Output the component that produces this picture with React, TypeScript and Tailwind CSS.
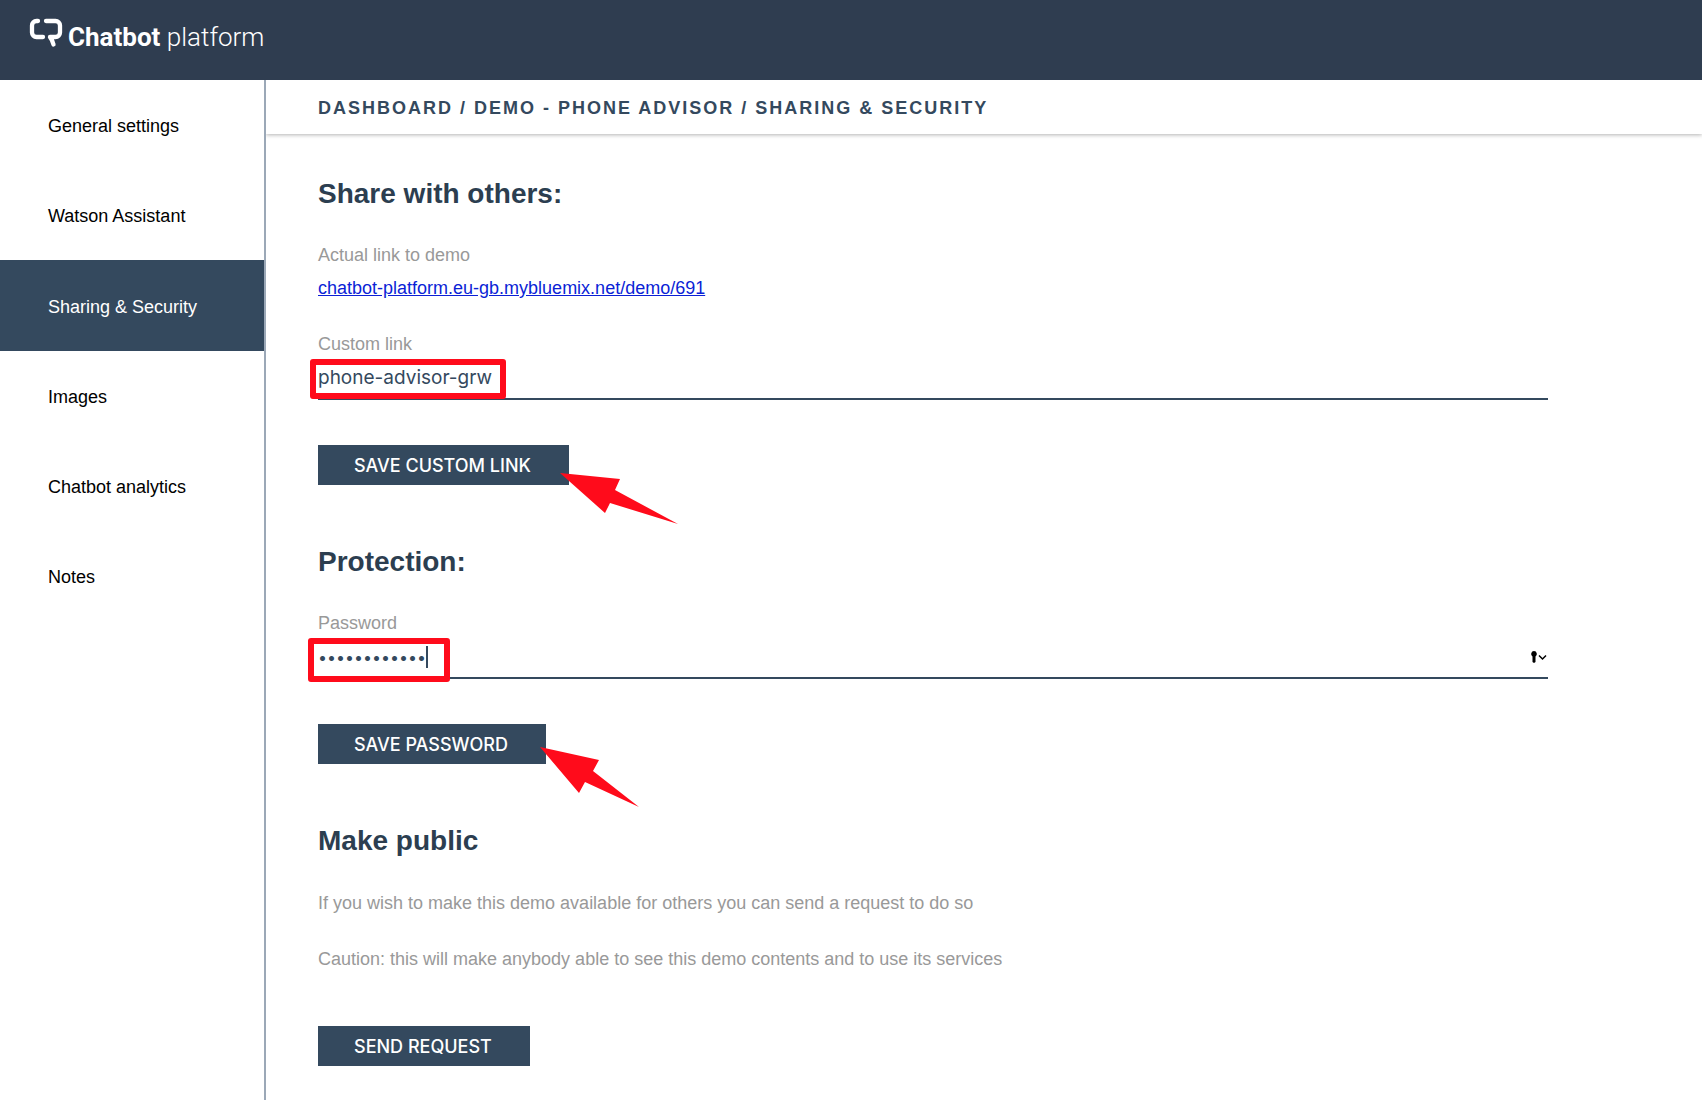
import type { ReactNode } from 'react';

const navItems = ['General settings', 'Watson Assistant', 'Sharing & Security', 'Images', 'Chatbot analytics', 'Notes'];

function Logo() {
  return (
    <svg className="h-8 w-9" viewBox="28 16 36 32" fill="none" stroke="#fff" strokeWidth="4.300" strokeLinecap="round" strokeLinejoin="round" aria-hidden="true">
      <path d="M38 21h-1.500a4.500 4.500 0 0 0-4.500 4.500v7a4.500 4.500 0 0 0 4.500 4.500h6.500" />
      <path d="M46 21h9.500a4.500 4.500 0 0 1 4.500 4.500v7a4.500 4.500 0 0 1-4.500 4.500h-5.500q2.500 3 3.500 7.500" />
    </svg>
  );
}

function Heading({ children }: { children: ReactNode }) {
  return <h2 className="text-[28px] leading-9 font-bold text-[#2c3e50]">{children}</h2>;
}

const labelClass = 'block text-lg leading-6 text-[#999999]';
const inputClass = 'block h-[41px] w-full border-b-2 border-[#34495e] bg-transparent pb-0.5 font-[Inter,sans-serif] text-[#34495e] outline-none';
const buttonClass = 'block h-10 bg-[#34495e] pt-0.5 pr-[38px] pl-9 font-[Inter,sans-serif] text-lg leading-6 font-medium text-white uppercase';

function Arrow({ points, className }: { points: string; className: string }) {
  return (
    <svg className={`pointer-events-none absolute ${className}`} aria-hidden="true">
      <polygon points={points} fill="#ff0b1b" />
    </svg>
  );
}

export default function App() {
  return (
    <div className="flex min-h-screen flex-col bg-white font-['Liberation_Sans',sans-serif]">
      <header className="flex h-20 items-start gap-1 bg-[#2f3d50] pt-4 pl-7">
        <Logo />
        <div className="pt-[3px] font-[Roboto,sans-serif] text-[26px] leading-9 text-white">
          <span className="font-bold">Chatbot</span> <span className="font-light">platform</span>
        </div>
      </header>
      <div className="flex flex-1">
        <nav className="w-[266px] shrink-0 border-r-2 border-[#9ba8b7]">
          {navItems.map((item) => (
            <a
              key={item}
              href="#"
              className={`flex items-center pt-0.5 pl-12 text-lg ${item === 'Sharing & Security' ? 'h-[91px] bg-[#34495e] text-white' : 'h-[90px] text-black'}`}
            >
              {item}
            </a>
          ))}
        </nav>
        <main className="min-w-0 flex-1 overflow-hidden">
          <div className="flex h-[54px] items-center pt-0.5 pl-[52px] text-lg font-bold tracking-[2px] text-[#34495e] shadow-[0_1px_4px_rgba(0,0,0,0.3)]">
            DASHBOARD / DEMO - PHONE ADVISOR / SHARING &amp; SECURITY
          </div>
          <div className="flex flex-col gap-[59px] pt-[42px] pr-[154px] pl-[52px]">
            <section>
              <Heading>Share with others:</Heading>
              <p className={`mt-[31px] ${labelClass}`}>Actual link to demo</p>
              <a href="#" className="mt-[9px] block w-fit text-lg leading-6 text-[#0b1fd6] underline">
                chatbot-platform.eu-gb.mybluemix.net/demo/691
              </a>
              <label htmlFor="custom-link" className={`mt-8 ${labelClass}`}>
                Custom link
              </label>
              <div className="relative mt-[3px]">
                <input id="custom-link" type="text" defaultValue="phone-advisor-grw" className={`text-[19px] ${inputClass}`} />
                <span className="pointer-events-none absolute top-0 -left-2 h-10 w-[196px] rounded-[3px] border-6 border-[#ff0b1b]" />
              </div>
              <div className="relative mt-[45px]">
                <button type="button" className={buttonClass}>Save custom link</button>
                <Arrow className="top-7 left-[242px] h-[51px] w-[118px]" points="0,0 60,6 55,17 118,51 50,30 45,40" />
              </div>
            </section>
            <section>
              <Heading>Protection:</Heading>
              <label htmlFor="password" className={`mt-[31px] ${labelClass}`}>
                Password
              </label>
              <div className="relative mt-[3px]">
                <input id="password" type="password" defaultValue="abcdefghijkl" className={`text-base ${inputClass}`} />
                <span className="absolute top-2 left-[108px] h-[22px] w-0.5 bg-[#34495e]" />
                <span className="pointer-events-none absolute top-0 -left-[10px] h-11 w-[142px] rounded-[3px] border-6 border-[#ff0b1b]" />
                <svg className="absolute top-3 right-0 h-4 w-[18px]" viewBox="0 0 18 16" aria-hidden="true">
                  <path d="M4 1a3 3 0 0 1 1.500 5.500v5.500l-1.500 1l-1.500-1v-5.500a3 3 0 0 1 1.500-5.500z" fill="#000" />
                  <path d="M9 5.500l3.500 3.500l3.500-3.500" fill="none" stroke="#000" strokeWidth="1.500" />
                </svg>
              </div>
              <div className="relative mt-[45px]">
                <button type="button" className={buttonClass}>Save password</button>
                <Arrow className="top-[23px] left-[222px] h-[60px] w-[99px]" points="0,0 59,13 53,24 99,60 45,35 39,46" />
              </div>
            </section>
            <section>
              <Heading>Make public</Heading>
              <p className={`mt-8 ${labelClass}`}>If you wish to make this demo available for others you can send a request to do so</p>
              <p className={`mt-8 ${labelClass}`}>Caution: this will make anybody able to see this demo contents and to use its services</p>
              <button type="button" className={`mt-[55px] ${buttonClass}`}>Send request</button>
            </section>
          </div>
        </main>
      </div>
    </div>
  );
}
